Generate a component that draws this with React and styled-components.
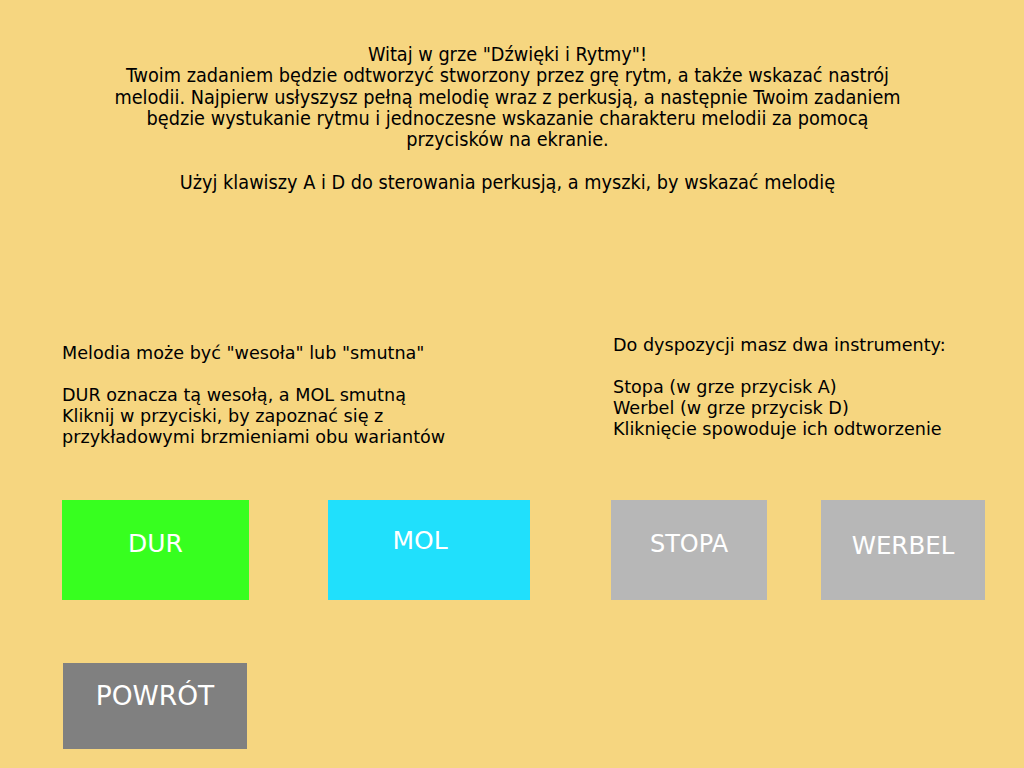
import React from "react";
import styled, { createGlobalStyle } from "styled-components";

const GlobalStyle = createGlobalStyle`
    html, body {
        margin: 0;
        padding: 0;
        background: #f6d680;
    }
    body {
        font-family: "DejaVu Sans", sans-serif;
        color: #000;
    }
`;

function App() {
    return (
        <Page>
            <GlobalStyle />
            {/* intro */}
            <Intro>
                Witaj w grze "Dźwięki i Rytmy"!
                <br />
                Twoim zadaniem będzie odtworzyć stworzony przez grę rytm, a także wskazać nastrój
                melodii. Najpierw usłyszysz pełną melodię wraz z perkusją, a następnie Twoim zadaniem
                będzie wystukanie rytmu i jednoczesne wskazanie charakteru melodii za pomocą
                przycisków na ekranie.
                <br />
                <br />
                Użyj klawiszy A i D do sterowania perkusją, a myszki, by wskazać melodię
            </Intro>

            {/* opisy */}
            <InfoRow>
                <InfoText $top={8} $width={400}>
                    Melodia może być "wesoła" lub "smutna"
                    <br />
                    <br />
                    DUR oznacza tą wesołą, a MOL smutną
                    <br />
                    Kliknij w przyciski, by zapoznać się z przykładowymi brzmieniami obu wariantów
                </InfoText>
                <InfoText $top={0} $width={400}>
                    Do dyspozycji masz dwa instrumenty:
                    <br />
                    <br />
                    Stopa (w grze przycisk A)
                    <br />
                    Werbel (w grze przycisk D)
                    <br />
                    Kliknięcie spowoduje ich odtworzenie
                </InfoText>
            </InfoRow>

            {/* przyciski */}
            <ButtonRow>
                <GameButton $bg="#37ff1f" $w={187} $ml={0} $dy={-6} $dx={0} $size={25}>
                    DUR
                </GameButton>
                <GameButton $bg="#20e0fc" $w={202} $ml={79} $dy={-9} $dx={-9} $size={25}>
                    MOL
                </GameButton>
                <GameButton $bg="#b7b7b7" $w={156} $ml={81} $dy={-6} $dx={0} $size={24}>
                    STOPA
                </GameButton>
                <GameButton $bg="#b7b7b7" $w={164} $ml={54} $dy={-4} $dx={0} $size={24.5}>
                    WERBEL
                </GameButton>
            </ButtonRow>

            <BackButton>POWRÓT</BackButton>
        </Page>
    );
}

export default App;

const Page = styled.div`
    width: 1024px;
    height: 768px;
    display: flex;
    flex-direction: column;
    overflow: hidden;
`;

const Intro = styled.div`
    margin: 44px 0 0 110px;
    width: 795px;
    text-align: center;
    font-family: "DejaVu Sans Condensed", "DejaVu Sans", sans-serif;
    font-stretch: condensed;
    font-size: 19.7px;
    line-height: 21.25px;
`;

const InfoRow = styled.div`
    display: flex;
    margin-top: 142px;
    padding-left: 62px;
    gap: 151px;
`;

const InfoText = styled.div`
    width: ${(props) => props.$width}px;
    margin-top: ${(props) => props.$top}px;
    font-size: 17.6px;
    line-height: 21px;
`;

const ButtonRow = styled.div`
    display: flex;
    margin-top: 52px;
    padding-left: 62px;
`;

const GameButton = styled.div`
    width: ${(props) => props.$w}px;
    height: 100px;
    margin-left: ${(props) => props.$ml}px;
    background: ${(props) => props.$bg};
    color: #fff;
    font-size: ${(props) => props.$size}px;
    display: flex;
    align-items: center;
    justify-content: center;
    padding-bottom: ${(props) => -props.$dy * 2}px;
    padding-right: ${(props) => Math.max(0, -props.$dx * 2)}px;
    padding-left: ${(props) => Math.max(0, props.$dx * 2)}px;
    box-sizing: border-box;
`;

const BackButton = styled.div`
    width: 184px;
    height: 86px;
    margin: 63px 0 0 63px;
    background: #808080;
    color: #fff;
    font-size: 26.5px;
    display: flex;
    align-items: center;
    justify-content: center;
    padding-bottom: 20px;
    box-sizing: border-box;
`;
